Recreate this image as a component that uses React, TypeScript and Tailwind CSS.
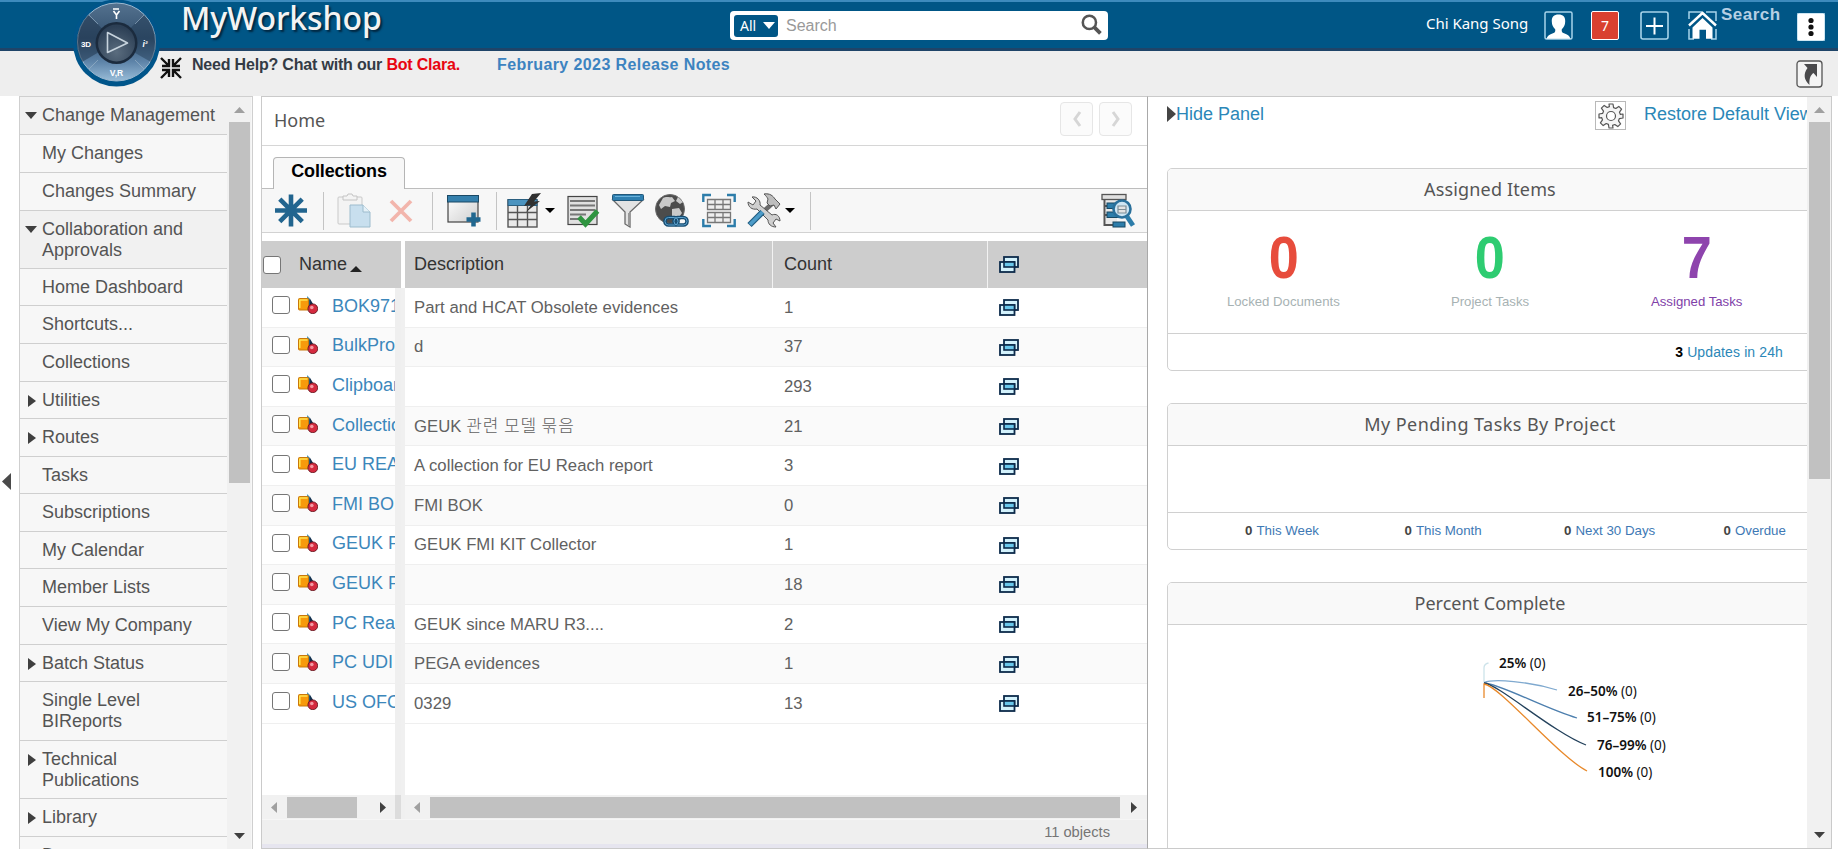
import type { ReactNode } from "react";

const NOTO = "font-['Noto_Sans',sans-serif]";

type Item = { label: ReactNode; h: string; arrow?: "down" | "right"; shade?: boolean };

const MENU: Item[] = [
  { label: "Change Management", h: "h-[38px]", arrow: "down", shade: true },
  { label: "My Changes", h: "h-[38px]" },
  { label: "Changes Summary", h: "h-[38px]" },
  { label: <>Collaboration and<br />Approvals</>, h: "h-[58px]", arrow: "down", shade: true },
  { label: "Home Dashboard", h: "h-[37px]" },
  { label: "Shortcuts...", h: "h-[38px]" },
  { label: "Collections", h: "h-[38px]" },
  { label: "Utilities", h: "h-[37px]", arrow: "right" },
  { label: "Routes", h: "h-[38px]", arrow: "right" },
  { label: "Tasks", h: "h-[37px]" },
  { label: "Subscriptions", h: "h-[38px]" },
  { label: "My Calendar", h: "h-[37px]" },
  { label: "Member Lists", h: "h-[38px]" },
  { label: "View My Company", h: "h-[38px]" },
  { label: "Batch Status", h: "h-[37px]", arrow: "right" },
  { label: <>Single Level<br />BIReports</>, h: "h-[59px]" },
  { label: <>Technical<br />Publications</>, h: "h-[58px]", arrow: "right" },
  { label: "Library", h: "h-[38px]", arrow: "right" },
  { label: "Documents", h: "h-[38px]" },
];

const ROWS: [string, string, string][] = [
  ["BOK971", "Part and HCAT Obsolete evidences", "1"],
  ["BulkPro", "d", "37"],
  ["Clipboar", "", "293"],
  ["Collectio", "GEUK 관련 모델 묶음", "21"],
  ["EU REA", "A collection for EU Reach report", "3"],
  ["FMI BO", "FMI BOK", "0"],
  ["GEUK F", "GEUK FMI KIT Collector", "1"],
  ["GEUK F", "", "18"],
  ["PC Rea", "GEUK since MARU R3....", "2"],
  ["PC UDI", "PEGA evidences", "1"],
  ["US OFC", "0329", "13"],
];

function Tri({ dir, className = "" }: { dir: "up" | "down" | "left" | "right"; className?: string }) {
  const pts = { up: "0,10 5,0 10,10", down: "0,0 10,0 5,10", left: "10,0 0,5 10,10", right: "0,0 10,5 0,10" }[dir];
  return (
    <svg viewBox="0 0 10 10" preserveAspectRatio="none" className={`shrink-0 ${className}`}>
      <polygon points={pts} fill="currentColor" />
    </svg>
  );
}

function Compass() {
  return (
    <svg viewBox="0 0 88 88" className="absolute left-[73px] top-[-3px] z-10 size-[88px]">
      <defs>
        <linearGradient id="ring" x1="0" y1="0" x2="0" y2="1">
          <stop offset="0" stopColor="#54728f" />
          <stop offset="0.45" stopColor="#33506e" />
          <stop offset="0.75" stopColor="#5d83a8" />
          <stop offset="1" stopColor="#98bcd8" />
        </linearGradient>
        <radialGradient id="hub" cx="0.5" cy="0.75" r="0.7">
          <stop offset="0" stopColor="#5a6c7e" />
          <stop offset="1" stopColor="#2c3f55" />
        </radialGradient>
      </defs>
      <circle cx="43.500" cy="44" r="43.500" fill="#00558a" />
      <circle cx="43.500" cy="43" r="39" fill="url(#ring)" stroke="#9db8cf" strokeWidth="1" />
      <path d="M43 43 15 16A39 39 0 0 0 9 63Z" fill="#20374f" opacity="0.55" />
      <path d="M43 43 71 16A39 39 0 0 1 78 63Z" fill="#20374f" opacity="0.45" />
      <g stroke="#9fb8cc" strokeWidth="1" opacity="0.6">
        <path d="M16 16l9 9M71 16l-9 9M16 70l9-9M71 70l-9-9" />
      </g>
      <circle cx="43.500" cy="44" r="21" fill="#1b2b3e" />
      <circle cx="43.500" cy="44" r="18.500" fill="url(#hub)" />
      <path d="M34.500 33.500v20L54.500 44Z" fill="none" stroke="#c7d3dd" strokeWidth="1.600" strokeLinejoin="round" />
      <g fill="#fff" fontFamily="Liberation Sans" fontWeight="bold" textAnchor="middle">
        <text x="13" y="47.500" fontSize="8">3D</text>
        <text x="43.500" y="77" fontSize="8.500">V,R</text>
        <text x="72" y="47.500" fontSize="8.500" fontStyle="italic">i²</text>
      </g>
      <path d="M40 10h6M40.500 12l3 4 3-4M43.500 16v4" fill="none" stroke="#fff" strokeWidth="1.600" />
    </svg>
  );
}

function Header() {
  return (
    <header className="relative flex h-[51px] shrink-0 items-start border-b-[3px] border-t-2 border-b-[#1f4468] border-t-[#3d8bbd] bg-[#005686]">
      <Compass />
      <h1 className={`ml-[181px] mt-[-7px] w-[549px] text-[32px] font-medium leading-[46px] tracking-[-0.1px] text-[#f3f3f3] [text-shadow:2px_2px_2px_#00263f] ${NOTO}`}>MyWorkshop</h1>
      <div className="mt-[9px] flex h-[29px] w-[378px] items-center rounded-[4px] bg-white pl-1 pr-1.5">
        <div className={`flex h-[22px] w-[44px] items-center justify-between rounded-[3px] bg-[#005686] pl-1.5 pr-[3px] text-[14px] text-white ${NOTO}`}>
          All <Tri dir="down" className="h-[7px] w-[12px]" />
        </div>
        <span className="ml-2 flex-1 text-[16px] text-[#999]">Search</span>
        <svg viewBox="0 0 20 20" className="mt-[-2px] size-[21px]" fill="none" stroke="#555">
          <circle cx="8" cy="8" r="6.300" strokeWidth="2.400" />
          <path d="m12.500 12.500 6 6" strokeWidth="3.600" />
        </svg>
      </div>
      <span className={`ml-[318px] mt-[10px] w-[118px] whitespace-nowrap text-[15px] leading-[22px] tracking-[-0.02px] text-white ${NOTO}`}>Chi Kang Song</span>
      <svg viewBox="0 0 29 29" className="mt-[9px] size-[29px]">
        <rect x="1" y="1" width="27" height="27" rx="1.500" fill="#005686" stroke="#a7d4ea" strokeWidth="1.500" />
        <path d="M14.500 3.500c4.500 0 7 2.500 6.700 7 0 3.500-1.500 6.200-3.400 7.700-.3 2.200 0 3.300 2.200 4 3.500 1.200 5.500 2.500 6.500 5.500H2.500c1-3 3-4.300 6.500-5.500 2.200-.7 2.500-1.800 2.200-4-1.900-1.500-3.400-4.200-3.400-7.700-.3-4.500 2.200-7 6.700-7Z" fill="#fff" />
      </svg>
      <div className={`ml-[18px] mt-[9px] flex h-[29px] w-[28px] items-center justify-center rounded-[2px] border border-white bg-[#d9402f] text-[14px] text-white ${NOTO}`}>7</div>
      <svg viewBox="0 0 29 29" className="ml-[21px] mt-[9px] size-[29px]">
        <rect x="1" y="1" width="27" height="27" rx="2" fill="none" stroke="#a7d4ea" strokeWidth="1.600" />
        <path d="M14.500 6.500v17M6 15h17" stroke="#fff" strokeWidth="2" />
      </svg>
      <svg viewBox="0 0 29 29" className="ml-[19px] mt-[9px] size-[29px]">
        <path d="M1 8V1h13M28 10V1H18M1 18v10h5M28 18v10h-5" fill="none" stroke="#a7d4ea" strokeWidth="1.500" />
        <path d="M1 14.500 14.500 2 28 14.500" fill="none" stroke="#fff" strokeWidth="2.400" />
        <path d="M4.500 16.500 14.500 7l10 9.500v11.200H18v-9h-6.500v9h-7Z" fill="#fff" />
      </svg>
      <span className="ml-[4px] mt-[3px] w-[76px] text-[17px] font-bold leading-[20px] tracking-[0.5px] text-[#b5cfe4]">Search</span>
      <svg viewBox="0 0 28 28" className="mt-[11px] size-[28px]">
        <rect width="28" height="28" rx="2" fill="#fff" stroke="#9ccce5" />
        <g fill="#111"><circle cx="14" cy="7.500" r="2.600" /><circle cx="14" cy="14" r="2.600" /><circle cx="14" cy="20.500" r="2.600" /></g>
      </svg>
    </header>
  );
}

function SubBar() {
  return (
    <div className="flex h-[45px] shrink-0 items-start bg-[#eeeeee] pl-[160px] pt-[5px] text-[16px] font-bold">
      <svg viewBox="0 0 22 22" className="mt-px size-[22px]" fill="none" stroke="#111" strokeWidth="2.400">
        <path d="M1 1l7 7M9 2v7H2M21 1l-7 7M13 2v7h7M1 21l7-7M9 20v-7H2M21 21l-7-7M13 20v-7h7" />
      </svg>
      <p className="ml-[10px] w-[306px] whitespace-nowrap leading-[18px] tracking-[-0.19px] text-[#333b45]">Need Help? Chat with our <span className="text-[#e80510]">Bot Clara.</span></p>
      <span className="ml-[-1px] whitespace-nowrap leading-[18px] tracking-[0.4px] text-[#3c83c0]">February 2023 Release Notes</span>
      <svg viewBox="0 0 27 28" className="ml-auto mr-[15px] mt-[4px] h-[28px] w-[27px]">
        <rect x="1" y="1" width="25" height="26" rx="3" fill="#f4f4f4" stroke="#555" strokeWidth="1.300" />
        <path d="M8 4h13v13l-3.500-4C14.500 15 13 19 13.500 25 8 20 7 14 11.500 8Z" fill="#4a4a4c" />
      </svg>
    </div>
  );
}

function Sidebar() {
  return (
    <nav className="flex w-[234px] shrink-0 overflow-hidden border-x border-t border-[#cfcfcf] bg-[#f7f7f7]">
      <div className="w-[207px] shrink-0 text-[18px] leading-[21px] text-[#545454]">
        {MENU.map((m, i) => (
          <div key={i} className={`flex items-start border-b border-[#cfcfcf] pt-[8px] ${m.h} ${m.shade ? "bg-[#f1f1f1]" : ""}`}>
            <div className="flex h-[21px] w-[22px] shrink-0 items-center text-[#3f3f3f]">
              {m.arrow === "down" && <Tri dir="down" className="ml-[5px] h-[7px] w-[12px]" />}
              {m.arrow === "right" && <Tri dir="right" className="ml-[8px] h-[12px] w-[8px]" />}
            </div>
            <span className="whitespace-nowrap">{m.label}</span>
          </div>
        ))}
      </div>
      <VScroll thumb="h-[361px]" />
    </nav>
  );
}

function VScroll({ thumb }: { thumb: string }) {
  return (
    <div className="flex w-[24px] shrink-0 flex-col items-center bg-[#f1f1f1] pt-[10px]">
      <Tri dir="up" className="h-[6px] w-[11px] text-[#a0a0a0]" />
      <div className={`mt-[9px] w-[21px] bg-[#c1c1c1] ${thumb}`} />
      <Tri dir="down" className="mb-[10px] mt-auto h-[6px] w-[11px] text-[#404040]" />
    </div>
  );
}

const I = "h-[35px] w-[34px] shrink-0";

function Toolbar() {
  const sep = "h-[38px] w-px shrink-0 bg-[#c4c4c4]";
  return (
    <div className="flex h-[44px] shrink-0 items-center border-b border-[#d2d2d2] bg-[#f7f7f7] pl-[12px] pr-[12px]">
      <svg viewBox="0 0 34 35" className={I} stroke="#22658f" strokeWidth="4.600">
        <path d="M17 1.500v32M1 17.500h32M5.800 6.200l22.500 22.500M28.200 6.200 5.700 28.700" />
      </svg>
      <i className={`ml-[15px] ${sep}`} />
      <svg viewBox="0 0 34 35" className={`ml-[13px] ${I}`}>
        <rect x="1" y="4" width="24" height="27" rx="1" fill="#f3f3f3" stroke="#c9c9c9" />
        <path d="M6 7V3h4l1-2h4l1 2h4v4Z" fill="#f4f4f4" stroke="#c4c4c4" />
        <path d="M13 12h13l7 7v15H13Z" fill="#c8dfee" stroke="#9dbccd" />
        <path d="M26 12v7h7" fill="#e5f1f8" stroke="#9dbccd" />
      </svg>
      <svg viewBox="0 0 24 24" className="ml-[18px] size-[24px] shrink-0" stroke="#f2b5ac" strokeWidth="3.800"><path d="m2 2 20 20M22 2 2 22" /></svg>
      <i className={`ml-[19px] ${sep}`} />
      <svg viewBox="0 0 34 35" className={`ml-[14px] ${I}`}>
        <defs><linearGradient id="win" x1="0" y1="0" x2="1" y2="1"><stop offset="0" stopColor="#fff" /><stop offset="1" stopColor="#cfcfcf" /></linearGradient></defs>
        <rect x="1" y="3" width="30" height="26" fill="url(#win)" stroke="#444" strokeWidth="1.200" />
        <rect x="0.500" y="2.500" width="31" height="6.500" fill="#3580ad" stroke="#1b4965" />
        <path d="M26.500 19.500v14M19.500 26.500h14" stroke="#20678f" strokeWidth="4.500" />
      </svg>
      <i className={`ml-[15px] ${sep}`} />
      <svg viewBox="0 0 34 35" className={`ml-[10px] ${I}`}>
        <rect x="1" y="7" width="29" height="27" fill="#e9e9e9" stroke="#555" strokeWidth="1.400" />
        <rect x="1" y="6.500" width="29" height="6" fill="#4a93bf" stroke="#2a5f80" />
        <path d="M1 19.500h29M1 26.500h29M10.500 13v21M20.500 13v21" stroke="#555" strokeWidth="1.400" />
        <path d="M25 1 17 13l7-1-5 7 14-11-6 .5L34 0Z" fill="#303030" />
      </svg>
      <Tri dir="down" className="ml-[4px] h-[5px] w-[10px] text-black" />
      <svg viewBox="0 0 34 35" className={`ml-[11px] ${I}`}>
        <rect x="2" y="3.500" width="29" height="28" fill="#e0e0e0" stroke="#444" strokeWidth="1.200" />
        <path d="M4 8h25M4 12.500h25M4 17h25M4 21.500h16M4 26h10" stroke="#777" strokeWidth="2.200" />
        <path d="m13 24 6.500 7L31.500 18" fill="none" stroke="#2f9440" strokeWidth="5" />
      </svg>
      <svg viewBox="0 0 34 35" className={`ml-[11px] ${I}`}>
        <path d="M2 7 14 19v12l5 3V19L32 7Z" fill="#e3e3e3" stroke="#6a6a6a" strokeWidth="1.300" />
        <path d="M18 20v13" stroke="#999" strokeWidth="2" />
        <rect x="1.500" y="1.500" width="31" height="6" rx="1" fill="#2e7fb0" stroke="#22587a" />
        <path d="M4 3.500h25" stroke="#69b1da" />
      </svg>
      <svg viewBox="0 0 34 35" className={`ml-[10px] ${I}`}>
        <circle cx="15" cy="16" r="14.500" fill="#4c4c4c" stroke="#6b6b6b" />
        <path d="M8 5c4-2 6 0 9-1l3 4-4 2-1 4-5-1-4 3-2-4Zm9 11 7-1 3 5-5 7-5-4Zm6-12 5 5-3 2-4-3Z" fill="#c9c9c9" />
        <g fill="none" stroke="#164d73" strokeWidth="3.600"><rect x="10" y="24.500" width="13" height="7.500" rx="3.500" /><rect x="19" y="24.500" width="13" height="7.500" rx="3.500" /></g>
        <g fill="none" stroke="#5fa3cd" strokeWidth="1"><rect x="10" y="24.500" width="13" height="7.500" rx="3.500" /><rect x="19" y="24.500" width="13" height="7.500" rx="3.500" /></g>
      </svg>
      <svg viewBox="0 0 34 35" className={`ml-[13px] ${I}`} fill="none">
        <path d="M1.300 9V2H9M25 2h7.700v7M1.300 26v7H9M25 33h7.700v-7" stroke="#2d7daa" strokeWidth="2.400" />
        <path d="M5.500 6.500h23v10h-23ZM5.500 19.500h23v10h-23ZM5.500 11.500h23M5.500 24.500h23M13 6.500v10M21 6.500v10M13 19.500v10M21 19.500v10" fill="#eee" stroke="#777" strokeWidth="1.300" />
      </svg>
      <svg viewBox="0 0 34 35" className={`ml-[11px] ${I}`}>
        <path d="M17 18 27 9" stroke="#6a6a6a" strokeWidth="4.500" />
        <path d="M17 1c6-1 9 2 11 5l5 5-4 5-2-4-4 1-3-3 1-4c-1-2-2-3-4-5Z" fill="#bdbdbd" stroke="#555" />
        <path d="M5 4 9 8 6 12 1 9c0 5 4 8 9 7l11 11c0 4 3 7 8 7l-3-4 3-4 4 2c0-5-4-8-8-6L13 12c1-4-3-9-8-8Z" fill="#cfcfcf" stroke="#555" />
        <path d="m2.500 32 13-13" stroke="#1f5c80" strokeWidth="6" />
        <path d="m3 31.500 12.500-12.500" stroke="#4d9cc9" strokeWidth="3.800" />
      </svg>
      <Tri dir="down" className="ml-[4px] h-[5px] w-[10px] text-black" />
      <i className={`ml-[15px] ${sep}`} />
      <svg viewBox="0 0 34 35" className={`ml-auto ${I}`}>
        <path d="M5 7h11v24H5Z" fill="#e9e9e9" />
        <rect x="1" y="1.500" width="24" height="5" fill="#e0e0e0" stroke="#555" strokeWidth="1.300" />
        <path d="M3.500 7v25H12M3.500 13H8M3.500 22H8" fill="none" stroke="#555" strokeWidth="2" />
        <rect x="6" y="10" width="12" height="5.500" fill="#2d7daa" stroke="#184863" />
        <rect x="6" y="19" width="12" height="5.500" fill="#2d7daa" stroke="#184863" />
        <rect x="12" y="29" width="12" height="5" fill="#2d7daa" stroke="#184863" />
        <circle cx="21" cy="16" r="8.500" fill="#cfe6f4" stroke="#2a709b" strokeWidth="2.600" />
        <path d="M17 13h8v7h-8ZM17 16.500h8" fill="#e3e3e3" stroke="#7d8d96" strokeWidth="1.200" />
        <path d="m26 23.500 6 9" stroke="#2d7daa" strokeWidth="4.800" />
      </svg>
    </div>
  );
}

function Popup({ className = "" }: { className?: string }) {
  return (
    <svg viewBox="0 0 20 17" className={`h-[17px] w-[20px] shrink-0 ${className}`}>
      <rect x="5" y="1" width="14" height="10" fill="#d3f2fc" stroke="#0c2a4a" strokeWidth="1.800" />
      <rect x="1" y="6" width="14.500" height="10" fill="#d3f2fc" stroke="#0c2a4a" strokeWidth="1.800" />
      <rect x="5" y="6" width="10.500" height="5" fill="#6ac8ec" stroke="#0c2a4a" strokeWidth="1.600" />
    </svg>
  );
}

function Shapes() {
  return (
    <svg viewBox="0 0 20 18" className="ml-[8px] h-[18px] w-[20px] shrink-0">
      <path d="M9.500 0 17 12H7Z" fill="#2a83a8" />
      <path d="M11.500 2l6 10h-6Z" fill="#12304e" />
      <rect x="0.500" y="2.500" width="10" height="11.500" rx="1" fill="#f79a0c" stroke="#c9780a" />
      <path d="M1.500 4h8M1.800 4v8" stroke="#ffe24d" strokeWidth="1.600" />
      <circle cx="14.800" cy="12.800" r="4.900" fill="#d42a3f" stroke="#5c1018" strokeWidth="0.800" />
      <circle cx="13.800" cy="11.500" r="1.800" fill="#f59aa4" />
    </svg>
  );
}

const BOX = "size-[18px] shrink-0 rounded-[3px] border border-[#767676] bg-white";

function Table() {
  return (
    <div className="mt-[8px] flex h-[578px] shrink-0">
      <div className="flex w-[139px] shrink-0 flex-col">
        <div className="flex h-[47px] shrink-0 items-center bg-[#cdcdcd] pl-px pt-0 text-[18px] text-[#333]">
          <i className={BOX} />
          <span className="ml-[18px] mt-[-1px]">Name</span>
          <Tri dir="up" className="ml-[3px] mt-[8px] h-[6px] w-[12px] text-[#222]" />
        </div>
        <div className="flex flex-1">
          <div className="flex w-[133px] flex-col overflow-hidden">
            {ROWS.map((r, i) => (
              <div key={i} className={`flex h-[39.6px] shrink-0 items-center border-b border-[#efefef] pl-[10px] pb-[4px] ${i % 2 ? "bg-[#fafafa]" : "bg-white"}`}>
                <i className={BOX} />
                <Shapes />
                <span className="ml-[14px] mt-[2px] w-[63px] shrink-0 overflow-hidden whitespace-nowrap text-[18px] text-[#3c87bb]">{r[0]}</span>
              </div>
            ))}
            <div className="mt-auto flex h-[24px] items-center bg-[#f1f1f1]">
              <Tri dir="left" className="ml-[9px] h-[11px] w-[6px] text-[#a0a0a0]" />
              <div className="ml-[10px] h-[21px] w-[70px] bg-[#c1c1c1]" />
              <Tri dir="right" className="ml-[23px] h-[11px] w-[6px] text-[#404040]" />
            </div>
          </div>
          <div className="flex w-[6px] flex-col bg-[#efefef]"><div className="mt-auto h-[24px] bg-[#dcdcdc]" /></div>
        </div>
      </div>
      <div className="flex w-[4px] shrink-0 flex-col pt-[47px]"><div className="flex-1 bg-[#f0f0f0]" /></div>
      <div className="flex flex-1 flex-col">
        <div className="flex h-[47px] shrink-0 items-center bg-[#cdcdcd] text-[18px] text-[#333]">
          <div className="flex h-full w-[368px] items-center border-r border-[#f2f2f2] pl-[9px]">Description</div>
          <div className="flex h-full w-[215px] items-center border-r border-[#f2f2f2] pl-[11px]">Count</div>
          <Popup className="ml-[11px]" />
        </div>
        {ROWS.map((r, i) => (
          <div key={i} className={`flex h-[39.6px] shrink-0 items-center border-b border-[#efefef] text-[16.700px] text-[#616161] ${i % 2 ? "bg-[#fafafa]" : "bg-white"}`}>
            <span className="w-[379px] pl-[9px] tracking-[0.04px]">
              {i === 3 ? <>GEUK <span className="font-['Noto_Sans_CJK_KR',sans-serif] text-[17px] font-light leading-[20px] tracking-[0.9px]">관련 모델 묶음</span></> : r[1]}
            </span>
            <span className="w-[215px]">{r[2]}</span>
            <Popup className="mt-[1px]" />
          </div>
        ))}
        <div className="mt-auto flex h-[24px] items-center bg-[#f1f1f1]">
          <Tri dir="left" className="ml-[9px] h-[11px] w-[6px] text-[#a0a0a0]" />
          <div className="ml-[10px] h-[21px] w-[690px] bg-[#c1c1c1]" />
          <Tri dir="right" className="ml-[11px] h-[11px] w-[6px] text-[#404040]" />
        </div>
      </div>
    </div>
  );
}

function MainPanel() {
  const nav = "flex h-[34px] w-[33px] items-center justify-center rounded-[4px] border border-[#e6e6e6] bg-[#fbfbfb]";
  return (
    <main className="ml-[8px] flex w-[887px] shrink-0 flex-col border-x border-b border-t border-[#cacaca] border-r-[#a9a9a9] bg-white">
      <div className="flex h-[49px] shrink-0 items-center border-b border-[#d6d6d6] pl-[12px] pr-[15px]">
        <span className={`mt-[-2px] flex-1 text-[18px] text-[#555] ${NOTO}`}>Home</span>
        <div className="mb-[5px] flex gap-[6px]">
          <div className={nav}><svg viewBox="0 0 10 16" className="h-[16px] w-[10px]" fill="none" stroke="#d6d6d6" strokeWidth="3"><path d="M8 1 3 8l5 7" /></svg></div>
          <div className={nav}><svg viewBox="0 0 10 16" className="h-[16px] w-[10px]" fill="none" stroke="#d6d6d6" strokeWidth="3"><path d="m2 1 5 7-5 7" /></svg></div>
        </div>
      </div>
      <div className="flex h-[43px] shrink-0 items-end border-b border-[#bdbdbd] pl-[11px]">
        <div className="mb-[-1px] flex h-[32px] w-[132px] items-center justify-center rounded-t-[4px] border border-b-0 border-[#b5b5b5] bg-[#f7f7f7] pb-[5px] text-[18px] font-bold text-black"><span className="tracking-[-0.12px]">Collections</span></div>
      </div>
      <Toolbar />
      <Table />
      <div className="flex h-[25px] shrink-0 items-center justify-end border-t border-[#f6f6f6] bg-[#efefef] pr-[37px] text-[14.700px] text-[#757575]">11 objects</div>
      <div className="flex-1 bg-[#e6e5ef]" />
    </main>
  );
}

function Card({ title, className, children, spacing = "" }: { title: string; className: string; children: ReactNode; spacing?: string }) {
  return (
    <section className={`flex w-[646px] shrink-0 flex-col overflow-hidden rounded-[5px] border border-[#d0d0d0] bg-white ${className}`}>
      <h2 className={`flex h-[42px] shrink-0 items-center justify-center border-b border-[#d0d0d0] bg-[#f9f9f9] text-[18px] text-[#555] ${spacing} ${NOTO}`}>{title}</h2>
      {children}
    </section>
  );
}

const PIE = [
  { d: "M316 57.500V43q0-4 4.500-5", c: "#cde3ea", x: 331, y: 43, b: "25%" },
  { d: "M316 57.500c10-4 45-1 73 7.500", c: "#7fa9cf", x: 400, y: 71, b: "26–50%" },
  { d: "M316 58c14 0 62 26 93 35", c: "#4d7fae", x: 419, y: 97, b: "51–75%" },
  { d: "M316 58c14 1 70 50 102 62", c: "#24425c", x: 429, y: 125, b: "76–99%" },
  { d: "M316 73V59c16 2 74 72 103 87", c: "#e8892b", x: 430, y: 152, b: "100%" },
];

function RightPanel() {
  const stats = [
    ["0", "Locked Documents", "text-[#e74c3c]", "text-[#a7b2b3]"],
    ["0", "Project Tasks", "text-[#2ecc71]", "text-[#a7b2b3]"],
    ["7", "Assigned Tasks", "text-[#8e44ad]", "text-[#8040a8]"],
  ];
  return (
    <aside className="flex w-[684px] shrink-0 border-b border-r border-t border-[#cacaca] bg-white">
      <div className="flex w-[659px] shrink-0 flex-col overflow-hidden pl-[19px]">
        <div className="flex h-[71px] shrink-0 items-start text-[18px] leading-[20px] text-[#2b87b8]">
          <Tri dir="right" className="mt-[9px] h-[16px] w-[9px] text-[#444]" />
          <span className="mt-[7px] w-[419px] shrink-0">Hide Panel</span>
          <div className="mt-[4px] flex h-[29px] w-[31px] shrink-0 items-center justify-center border border-[#b9b9b9]">
            <svg viewBox="0 0 26 26" className="size-[26px]" fill="#f4f4f4" stroke="#555" strokeWidth="1.200" strokeLinejoin="round">
              <path d="M11 1h4l.6 3.600 2.200.9 3-2.100 2.800 2.800-2.100 3 .9 2.200L25 11v4l-3.600.6-.9 2.200 2.100 3-2.800 2.800-3-2.100-2.200.9L15 25h-4l-.6-3.600-2.200-.9-3 2.100-2.800-2.800 2.100-3-.9-2.200L1 15v-4l3.600-.6.9-2.200-2.100-3 2.800-2.800 3 2.100 2.200-.9Z" />
              <circle cx="13" cy="13" r="4.500" fill="#fff" />
            </svg>
          </div>
          <span className="ml-[18px] mt-[7px] shrink-0 whitespace-nowrap">Restore Default View</span>
        </div>
        <Card title="Assigned Items" spacing="tracking-[0.15px]" className="h-[203px]">
          <div className="flex h-[123px] border-b border-[#d0d0d0] px-[12px]">
            {stats.map(([n, l, c, lc]) => (
              <div key={l} className="flex flex-1 flex-col items-center pt-[15px]">
                <span className={`scale-x-[0.9] text-[60px] font-bold leading-[63px] ${c}`}>{n}</span>
                <span className={`mt-[4px] text-[13.200px] leading-[18px] ${lc}`}>{l}</span>
              </div>
            ))}
          </div>
          <div className="flex flex-1 items-center justify-end pr-[29px] text-[14px] text-[#2b87b8]"><b className="mr-[4px] text-black">3</b><span className="tracking-[0.12px]">Updates in 24h</span></div>
        </Card>
        <Card title="My Pending Tasks By Project" spacing="tracking-[0.45px]" className="mt-[32px] h-[147px]">
          <div className="h-[67px] shrink-0 border-b border-[#d0d0d0]" />
          <div className="flex flex-1 items-center pl-[77px] text-[13.300px] text-[#3e79b5]">
            {["This Week", "This Month", "Next 30 Days", "Overdue"].map((t) => (
              <span key={t} className="w-[159.500px] shrink-0"><b className="mr-[4px] text-[#444]">0</b>{t}</span>
            ))}
          </div>
        </Card>
        <Card title="Percent Complete" className="mt-[32px] h-[300px]">
          <svg viewBox="0 0 644 230" className="h-[230px] w-[644px] shrink-0">
            {PIE.map((p) => (
              <g key={p.b}>
                <path d={p.d} fill="none" stroke={p.c} strokeWidth="1.300" />
                <text x={p.x} y={p.y} fontSize="13.500" fill="#111" fontFamily="Noto Sans"><tspan fontWeight="600">{p.b}</tspan> (0)</text>
              </g>
            ))}
          </svg>
        </Card>
      </div>
      <VScroll thumb="h-[357px]" />
    </aside>
  );
}

export default function App() {
  return (
    <div className="flex h-[849px] w-full flex-col overflow-hidden bg-white font-['Liberation_Sans',Arial,sans-serif]">
      <Header />
      <SubBar />
      <div className="flex h-[753px] shrink-0">
        <div className="flex w-[19px] shrink-0 items-start justify-center pt-[377px]">
          <Tri dir="left" className="mr-[6px] h-[17px] w-[9px] text-[#4a4a4a]" />
        </div>
        <Sidebar />
        <MainPanel />
        <RightPanel />
      </div>
    </div>
  );
}
